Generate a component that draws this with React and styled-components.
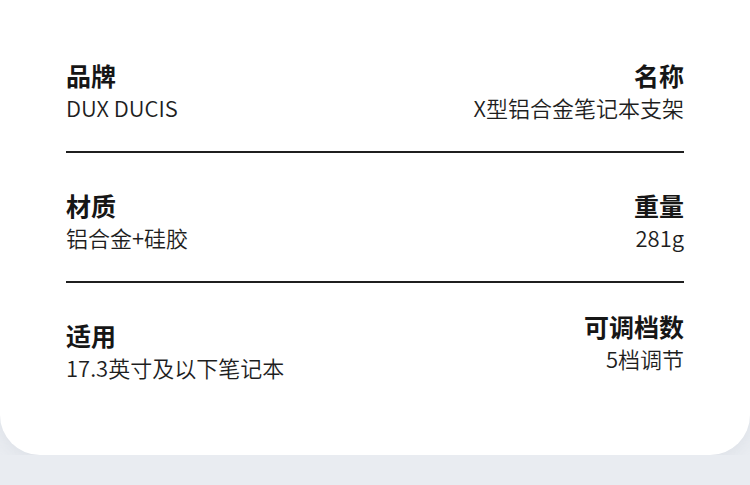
import React from 'react';
import styled, { createGlobalStyle } from 'styled-components';

const GlobalStyle = createGlobalStyle`
  html, body {
    margin: 0;
    padding: 0;
    background: #e9ecf1;
  }
  body {
    font-family: "Noto Sans CJK SC", "Noto Sans", sans-serif;
    color: #1c1c1c;
  }
`;

const specs = [
  {
    left: { title: '品牌', value: 'DUX DUCIS' },
    right: { title: '名称', value: 'X型铝合金笔记本支架' },
  },
  {
    left: { title: '材质', value: '铝合金+硅胶' },
    right: { title: '重量', value: '281g' },
  },
  {
    left: { title: '适用', value: '17.3英寸及以下笔记本' },
    right: { title: '可调档数', value: '5档调节', lift: 9 },
  },
];

const App = () => {
  return (
    <>
      <GlobalStyle />
      <Card>
        {specs.map((row, i) => (
          <React.Fragment key={row.left.title}>
            {i > 0 && <Divider />}
            <Row>
              <Cell>
                <Title>{row.left.title}</Title>
                <Value>{row.left.value}</Value>
              </Cell>
              <Cell $right $lift={row.right.lift}>
                <Title>{row.right.title}</Title>
                <Value>{row.right.value}</Value>
              </Cell>
            </Row>
          </React.Fragment>
        ))}
      </Card>
    </>
  );
};

export default App;

const Card = styled.div`
  width: 750px;
  height: 455px;
  box-sizing: border-box;
  padding: 59px 66px 0;
  background: #ffffff;
  border-radius: 0 0 40px 40px;
  box-shadow: 0 4px 14px rgba(200, 206, 216, 0.35);
`;

const Row = styled.div`
  display: flex;
  justify-content: space-between;
  align-items: flex-start;
`;

const Cell = styled.div`
  display: flex;
  flex-direction: column;
  align-items: ${(p) => (p.$right ? 'flex-end' : 'flex-start')};
  margin-top: ${(p) => (p.$lift ? `-${p.$lift}px` : '0')};
`;

const Title = styled.div`
  font-size: 25px;
  font-weight: 600;
  line-height: 32px;
  color: #161616;
`;

const Value = styled.div`
  font-size: 22px;
  font-weight: 350;
  line-height: 32px;
  color: #1e1e1e;
`;

const Divider = styled.div`
  height: 2px;
  background: #1f1f1f;
  margin: 28px 0 36px;
`;
